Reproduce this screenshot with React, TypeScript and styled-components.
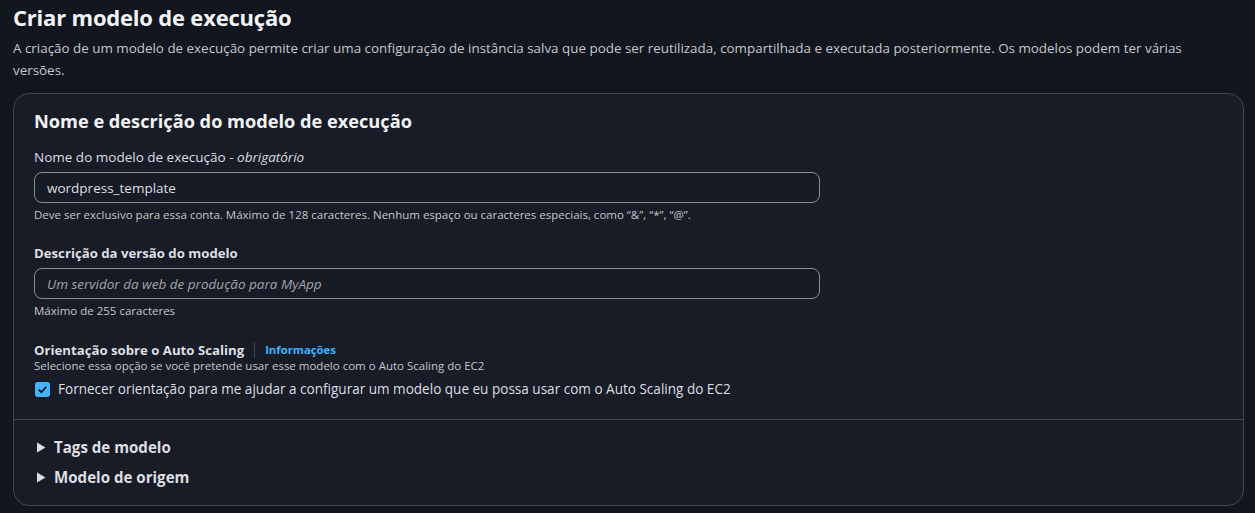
import React from "react";
import styled, { createGlobalStyle } from "styled-components";

const Global = createGlobalStyle`
  html, body {
    margin: 0;
    padding: 0;
    background: #12161e;
  }
  body {
    font-family: "Open Sans", "Noto Sans", sans-serif;
    color: #dedee3;
  }
`;

const Page = styled.div`
  padding: 3px 12px 8px 13px;
`;

const Title = styled.h1`
  margin: 0;
  font-size: 22px;
  line-height: 28px;
  font-weight: 700;
  color: #f3f3f7;
  letter-spacing: -0.2px;
`;

const Lead = styled.p`
  margin: 6px 0 0;
  font-size: 13.4px;
  line-height: 22px;
  color: #c6c6cd;
  max-width: 1210px;
`;

const Card = styled.section`
  margin-top: 12px;
  background: #171c26;
  border: 1px solid #424650;
  border-radius: 16px;
  width: 1231px;
  box-sizing: border-box;
`;

const Body = styled.div`
  padding: 14px 20px 20px 20px;
`;

const CardTitle = styled.h2`
  margin: 0 0 13px;
  font-size: 18.2px;
  line-height: 26px;
  font-weight: 700;
  color: #f3f3f7;
`;

const Field = styled.div<{ $gap?: number }>`
  margin-bottom: ${(p) => p.$gap ?? 0}px;
`;

const Label = styled.div<{ $bold?: boolean }>`
  font-size: ${(p) => (p.$bold ? 13.2 : 13.5)}px;
  line-height: 20px;
  font-weight: ${(p) => (p.$bold ? 700 : 400)};
  color: #dedee3;
  display: flex;
  align-items: center;
  em {
    font-style: italic;
  }
`;

const Input = styled.input`
  display: block;
  box-sizing: border-box;
  margin-top: 5px;
  width: 786px;
  height: 31px;
  border: 1px solid #8c8c94;
  border-radius: 8px;
  background: #161b25;
  color: #dedee3;
  font-family: inherit;
  font-size: 13.5px;
  padding: 0 12px;
  outline: none;
  &::placeholder {
    color: #a4a4ad;
    font-style: italic;
  }
`;

const Hint = styled.div<{ $tight?: boolean }>`
  margin-top: ${(p) => (p.$tight ? -2 : 4)}px;
  font-size: 11.5px;
  line-height: 16px;
  color: #c6c6cd;
`;

const Sep = styled.span`
  display: inline-block;
  width: 1px;
  height: 16px;
  background: #424650;
  margin: 0 10px;
`;

const Info = styled.a`
  font-size: 11.3px;
  font-weight: 700;
  color: #42b4ff;
  text-decoration: none;
`;

const CheckRow = styled.label`
  display: flex;
  align-items: center;
  gap: 8px;
  margin-top: 5px;
  font-size: 13.56px;
  line-height: 20px;
  color: #dedee3;
`;

const Box = styled.span`
  width: 15px;
  height: 15px;
  border-radius: 3px;
  background: #42b4ff;
  display: inline-flex;
  align-items: center;
  justify-content: center;
  margin-left: 1px;
`;

const Divider = styled.hr`
  margin: 0;
  border: 0;
  border-top: 1px solid #424650;
`;

const Sections = styled.div`
  padding: 16px 20px 17px 22px;
  display: flex;
  flex-direction: column;
  gap: 8px;
`;

const Expander = styled.div`
  display: flex;
  align-items: center;
  gap: 8px;
  font-size: 15.1px;
  line-height: 22px;
  font-weight: 700;
  color: #dedee3;
`;

const Caret = () => (
  <svg width="10" height="11" viewBox="0 0 10 11">
    <path d="M1 0.5 L9.5 5.5 L1 10.5 Z" fill="#dedee3" />
  </svg>
);

export default function App() {
  return (
    <>
      <Global />
      <Page>
        <Title>Criar modelo de execução</Title>
        <Lead>
          A criação de um modelo de execução permite criar uma configuração de instância salva que pode ser
          reutilizada, compartilhada e executada posteriormente. Os modelos podem ter várias versões.
        </Lead>
        <Card>
          <Body>
            <CardTitle>Nome e descrição do modelo de execução</CardTitle>
            <Field $gap={20}>
              <Label>
                Nome do modelo de execução -&nbsp;<em>obrigatório</em>
              </Label>
              <Input defaultValue="wordpress_template" />
              <Hint>
                Deve ser exclusivo para essa conta. Máximo de 128 caracteres. Nenhum espaço ou caracteres especiais,
                como “&amp;”, “*”, “@”.
              </Hint>
            </Field>
            <Field $gap={21}>
              <Label $bold>Descrição da versão do modelo</Label>
              <Input placeholder="Um servidor da web de produção para MyApp" />
              <Hint>Máximo de 255 caracteres</Hint>
            </Field>
            <Field>
              <Label $bold>
                Orientação sobre o Auto Scaling
                <Sep />
                <Info href="#">Informações</Info>
              </Label>
              <Hint $tight>Selecione essa opção se você pretende usar esse modelo com o Auto Scaling do EC2</Hint>
              <CheckRow>
                <Box>
                  <svg width="11" height="11" viewBox="0 0 12 12">
                    <path d="M2 6.3 L4.8 9 L10 3" fill="none" stroke="#0f141a" strokeWidth="2" />
                  </svg>
                </Box>
                Fornecer orientação para me ajudar a configurar um modelo que eu possa usar com o Auto Scaling do EC2
              </CheckRow>
            </Field>
          </Body>
          <Divider />
          <Sections>
            <Expander>
              <Caret />
              Tags de modelo
            </Expander>
            <Expander>
              <Caret />
              Modelo de origem
            </Expander>
          </Sections>
        </Card>
      </Page>
    </>
  );
}
